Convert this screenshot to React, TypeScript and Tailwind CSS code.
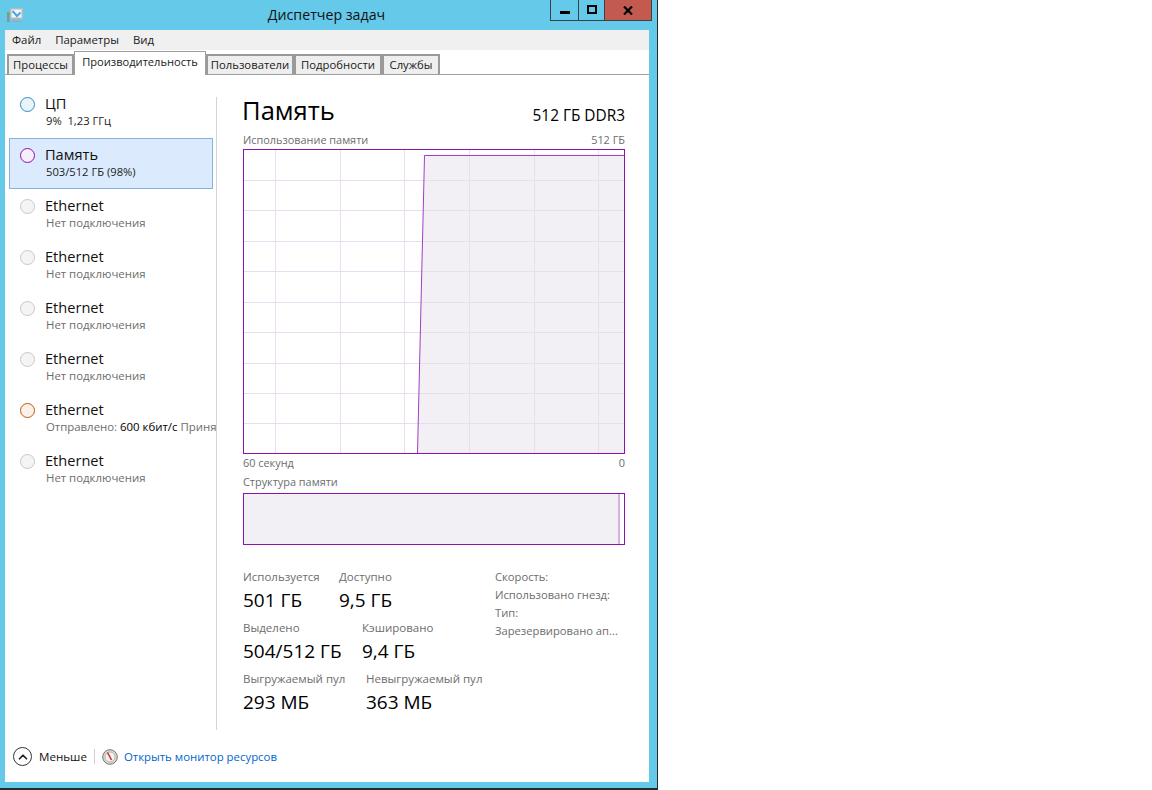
import { ChevronUp } from 'lucide-react';

const font = { fontFamily: '"Open Sans", "Noto Sans", sans-serif' };

const tabs = [
  { label: 'Процессы', width: 'w-[67px]' },
  { label: 'Производительность', width: 'w-[132px]', active: true },
  { label: 'Пользователи', width: 'w-[88px]' },
  { label: 'Подробности', width: 'w-[88px]' },
  { label: 'Службы', width: 'w-[58px]' },
];

const devices = [
  { name: 'ЦП', sub: '9%  1,23 ГГц', ring: 'border-[#2f8cc4]', fill: 'bg-[#eaf3fa]', dark: true },
  { name: 'Память', sub: '503/512 ГБ (98%)', ring: 'border-[#8b12ae]', fill: 'bg-[#f6eef9]', dark: true, selected: true },
  { name: 'Ethernet', sub: 'Нет подключения', ring: 'border-[#c8c8c8]', fill: 'bg-[#f4f4f4]' },
  { name: 'Ethernet', sub: 'Нет подключения', ring: 'border-[#c8c8c8]', fill: 'bg-[#f4f4f4]' },
  { name: 'Ethernet', sub: 'Нет подключения', ring: 'border-[#c8c8c8]', fill: 'bg-[#f4f4f4]' },
  { name: 'Ethernet', sub: 'Нет подключения', ring: 'border-[#c8c8c8]', fill: 'bg-[#f4f4f4]' },
  { name: 'Ethernet', sub: '', ring: 'border-[#b85c14]', fill: 'bg-[#fbf1e8]', traffic: true },
  { name: 'Ethernet', sub: 'Нет подключения', ring: 'border-[#c8c8c8]', fill: 'bg-[#f4f4f4]' },
];

const vLines = [275, 340, 404, 469, 534, 598];
const hLines = [180, 210, 241, 271, 302, 332, 363, 393, 423];

function MemoryChart() {
  return (
    <svg width="382" height="305" viewBox="243 149 382 305" className="block">
      <rect x="243" y="149" width="382" height="305" fill="#ffffff" />
      <polygon points="417.5,453 424.5,155.5 624,155.5 624,453" fill="#f2f0f4" />
      {vLines.map((x) => (
        <line key={x} x1={x + 0.5} x2={x + 0.5} y1="149" y2="453" stroke="#ecdcf0" />
      ))}
      {hLines.map((y) => (
        <line key={y} x1="243" x2="624" y1={y + 0.5} y2={y + 0.5} stroke="#ecdcf0" />
      ))}
      <polyline points="417.5,453 424.5,155.5 624.5,155.5" fill="none" stroke="#a13fc4" />
      <rect x="243.5" y="149.5" width="381" height="304" fill="none" stroke="#8b12ae" />
    </svg>
  );
}

function AppIcon() {
  return (
    <svg width="18" height="15" viewBox="0 0 18 15" className="block">
      <rect x="0" y="4" width="2.5" height="10" fill="#8a9298" />
      <rect x="0" y="5" width="2.5" height="2" fill="#4fc04f" />
      <rect x="3.5" y="0.5" width="12" height="10" fill="#cdd6db" stroke="#b4bcc0" />
      <rect x="5" y="2" width="9" height="7" fill="#f2f7fb" />
      <polyline points="5.5,3 10,8 13.5,4.5" fill="none" stroke="#4aa3ec" strokeWidth="2" />
      <rect x="7.5" y="11" width="4" height="2" fill="#a9b1b6" />
      <rect x="5.5" y="13" width="8" height="1" fill="#9aa4aa" />
    </svg>
  );
}

function GaugeIcon() {
  return (
    <svg width="16" height="16" viewBox="0 0 16 16" className="block">
      <circle cx="8" cy="8" r="7.3" fill="#d8d8d0" stroke="#777772" />
      <circle cx="8" cy="8" r="5" fill="#f4f4ee" stroke="#b8b8b0" />
      <line x1="5.5" y1="3.5" x2="9.5" y2="11" stroke="#c8262c" strokeWidth="1.5" />
    </svg>
  );
}

function Stat({ label, value, className }: { label: string; value: string; className?: string }) {
  return (
    <div className={className}>
      <div className="text-[11.5px] leading-[16px] text-[#6d6d6d]">{label}</div>
      <div className="mt-[3px] text-[19px] leading-[24px] text-black">{value}</div>
    </div>
  );
}

export default function App() {
  return (
    <div className="flex h-[790px] w-[1152px] bg-white" style={font}>
      <div className="relative flex h-[790px] w-[658px] flex-col border-r border-b-2 border-r-[#2b2b2b] border-b-[#2b2b2b] bg-[#65c9ea]">
        {/* Title bar */}
        <div className="relative flex h-[30px] shrink-0 items-center justify-center pl-[5px]">
          <div className="absolute left-[7px] top-[8px]">
            <AppIcon />
          </div>
          <span className="mr-[9px] mt-[-1px] text-[14.2px] text-[#111]">Диспетчер задач</span>
          <div className="absolute left-[550px] top-0 flex h-[21px] border-x border-b border-[#3f3f46]">
            <div className="flex w-[28px] items-center justify-center border-r border-[#3f3f46]">
              <div className="mt-[4px] h-[3px] w-[10px] bg-black" />
            </div>
            <div className="flex w-[26px] items-center justify-center border-r border-[#3f3f46]">
              <div className="mb-[1px] h-[9px] w-[10px] border-2 border-black" />
            </div>
            <div className="flex w-[46px] items-center justify-center bg-[#c35a50]">
              <svg width="10" height="9" viewBox="0 0 10 9">
                <path d="M1 0.5 L9 8.5 M9 0.5 L1 8.5" stroke="black" strokeWidth="2.2" />
              </svg>
            </div>
          </div>
        </div>

        {/* Client area */}
        <div className="mx-[5px] flex h-[752px] w-[644px] flex-col bg-white">
          <div className="flex h-[20px] shrink-0 items-center gap-[14px] bg-[#f0f0f0] pl-[7px] text-[11.4px] text-[#1a1a1a]">
            <span>Файл</span>
            <span>Параметры</span>
            <span>Вид</span>
          </div>

          <div className="flex h-[25px] shrink-0 items-end border-b border-[#a0a0a0] pl-[2px]">
            {tabs.map((tab) =>
              tab.active ? (
                <div
                  key={tab.label}
                  className={`relative z-10 -mb-px flex h-[24px] ${tab.width} items-center justify-center border-x border-t border-[#a0a0a0] bg-white pb-[2px] text-[11.1px] text-[#1a1a1a]`}
                >
                  {tab.label}
                </div>
              ) : (
                <div
                  key={tab.label}
                  className={`flex h-[20px] ${tab.width} items-center justify-center border-x-2 border-t-2 border-[#9a9a9a] bg-[#eeeeee] text-[11.3px] text-[#1a1a1a]`}
                >
                  {tab.label}
                </div>
              ),
            )}
          </div>

          <div className="flex h-[656px] shrink-0">
            {/* Device list */}
            <div className="h-full w-[211px] shrink-0 pl-[4px] pt-[12px]">
              <div className="flex flex-col">
                {devices.map((d, i) => (
                  <div
                    key={i}
                    className={`flex h-[51px] w-[204px] items-start border pl-[10px] pt-[7px] ${
                      d.selected ? 'border-[#7fb4e0] bg-[#dbeafc]' : 'border-transparent'
                    }`}
                  >
                    <div className={`mt-[2px] h-[15px] w-[15px] shrink-0 rounded-full border-[1.5px] ${d.ring} ${d.fill}`} />
                    <div className="ml-[10px] mt-[-1px] w-[171px] shrink-0 overflow-hidden whitespace-pre">
                      <div className="text-[14.6px] leading-[19px] text-[#111]">{d.name}</div>
                      {d.traffic ? (
                        <div className="ml-px text-[11.4px] leading-[16px] text-[#6d6d6d]">
                          Отправлено: <span className="text-black">600 кбит/с</span> Принято: 0 кбит/с
                        </div>
                      ) : (
                        <div className={`ml-px leading-[16px] ${d.dark ? 'text-[11.2px] text-[#222]' : 'text-[11.4px] text-[#6d6d6d]'}`}>{d.sub}</div>
                      )}
                    </div>
                  </div>
                ))}
              </div>
            </div>

            {/* Divider */}
            <div className="mt-[22px] h-[633px] w-px shrink-0 bg-[#d4d4d4]" />

            {/* Detail pane */}
            <div className="ml-[26px] w-[382px] shrink-0">
              <div className="flex h-[53px] items-start justify-between pt-[19px]">
                <span className="ml-[-1px] text-[25.6px] leading-[34px] text-black">Память</span>
                <span className="mt-[12px] text-[15.4px] leading-[20px] text-black">512 ГБ DDR3</span>
              </div>
              <div className="flex h-[21px] justify-between pt-[4px] text-[10.9px] leading-[16px] text-[#6d6d6d]">
                <span>Использование памяти</span>
                <span>512 ГБ</span>
              </div>
              <MemoryChart />
              <div className="flex h-[19px] justify-between pt-[1px] text-[10.9px] leading-[16px] text-[#6d6d6d]">
                <span>60 секунд</span>
                <span>0</span>
              </div>
              <div className="h-[20px] pt-[1px] text-[10.9px] leading-[16px] text-[#6d6d6d]">Структура памяти</div>
              <div className="flex h-[52px] border border-[#8b12ae]">
                <div className="flex-1 bg-[#f2f0f4]" />
                <div className="w-[2px] bg-[#d2b4dc]" />
                <div className="w-[4px] bg-white" />
              </div>

              <div className="mt-[24px] flex">
                <div className="w-[252px]">
                  <div className="flex h-[51px]">
                    <Stat className="w-[96px]" label="Используется" value="501 ГБ" />
                    <Stat label="Доступно" value="9,5 ГБ" />
                  </div>
                  <div className="flex h-[51px]">
                    <Stat className="w-[119px]" label="Выделено" value="504/512 ГБ" />
                    <Stat label="Кэшировано" value="9,4 ГБ" />
                  </div>
                  <div className="flex h-[51px]">
                    <Stat className="w-[123px]" label="Выгружаемый пул" value="293 МБ" />
                    <Stat label="Невыгружаемый пул" value="363 МБ" />
                  </div>
                </div>
                <div className="mt-[-1px] text-[11.2px] leading-[18px] text-[#6d6d6d]">
                  <div>Скорость:</div>
                  <div>Использовано гнезд:</div>
                  <div>Тип:</div>
                  <div>Зарезервировано ап...</div>
                </div>
              </div>
            </div>
          </div>

          {/* Footer */}
          <div className="flex flex-1 items-center pl-[8px]">
            <div className="flex h-[19px] w-[19px] items-center justify-center rounded-full border-[1.5px] border-[#333]">
              <ChevronUp size={14} strokeWidth={3} className="text-[#222]" />
            </div>
            <span className="ml-[7px] text-[11.6px] text-[#111]">Меньше</span>
            <div className="ml-[7px] h-[15px] w-px bg-[#cfcfcf]" />
            <div className="ml-[7px]">
              <GaugeIcon />
            </div>
            <span className="ml-[6px] mt-[1px] text-[11.4px] text-[#0066cc]">Открыть монитор ресурсов</span>
          </div>
        </div>
      </div>
    </div>
  );
}
